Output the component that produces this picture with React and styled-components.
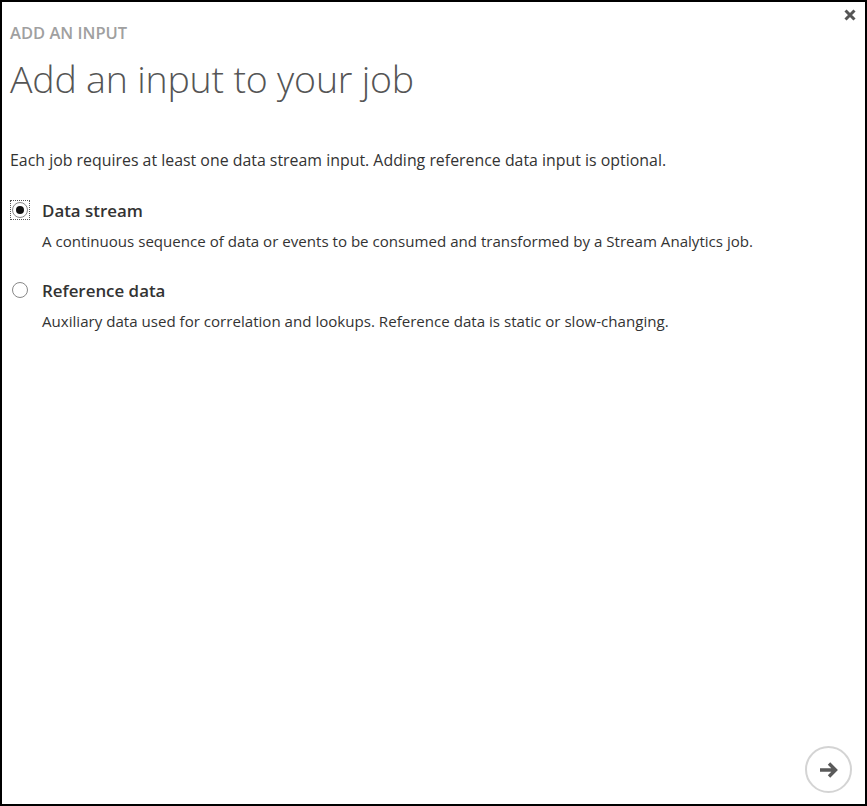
import React, { useState } from 'react';
import styled, { createGlobalStyle } from 'styled-components';

const GlobalStyle = createGlobalStyle`
  html, body { margin: 0; padding: 0; background: #fff; }
  * { box-sizing: border-box; }
`;

const FONT = '"Open Sans", "Noto Sans", "Liberation Sans", sans-serif';

const Dialog = styled.div`
  position: relative;
  width: 867px;
  height: 806px;
  border: 2px solid #000;
  background: #fff;
  font-family: ${FONT};
  color: #333;
  display: flex;
  flex-direction: column;
  padding: 20px 8px 0 8px;
`;

const Close = styled.button`
  position: absolute;
  top: 6px;
  right: 8px;
  width: 14px;
  height: 14px;
  padding: 0;
  border: 0;
  background: none;
  cursor: pointer;
`;

const Eyebrow = styled.div`
  font-size: 16.5px;
  font-weight: 600;
  color: #a0a0a0;
  line-height: 22px;
`;

const Title = styled.h1`
  margin: 12px 0 0;
  font-size: 37.5px;
  font-weight: 300;
  color: #555;
  line-height: 46px;
  letter-spacing: -0.2px;
`;

const Intro = styled.p`
  margin: 48px 0 0;
  font-size: 15.9px;
  line-height: 20px;
  color: #333;
`;

const Options = styled.div`
  margin-top: 30px;
  display: flex;
  flex-direction: column;
  gap: 29px;
`;

const Option = styled.label`
  display: grid;
  grid-template-columns: 20px 1fr;
  column-gap: 12px;
  row-gap: 9px;
  cursor: pointer;
`;

const RadioWrap = styled.span`
  width: 20px;
  height: 20px;
  display: flex;
  align-items: center;
  justify-content: center;
  border: 1px dotted ${p => (p.focused ? '#555' : 'transparent')};
  align-self: center;
  margin-top: -3px;
`;

const Radio = styled.span`
  width: 16px;
  height: 16px;
  border-radius: 50%;
  border: 1px solid #888;
  display: flex;
  align-items: center;
  justify-content: center;
  &::after {
    content: '';
    width: 8px;
    height: 8px;
    border-radius: 50%;
    background: ${p => (p.checked ? '#111' : 'transparent')};
  }
`;

const OptionLabel = styled.span`
  font-size: 16.9px;
  font-weight: 600;
  color: #333;
  line-height: 22px;
`;

const OptionDesc = styled.span`
  grid-column: 2;
  font-size: 15.1px;
  line-height: 20px;
  color: #333;
`;

const Footer = styled.div`
  margin-top: auto;
  display: flex;
  justify-content: flex-end;
  padding: 0 5px 11px 0;
`;

const NextButton = styled.button`
  width: 47px;
  height: 47px;
  border-radius: 50%;
  border: 2px solid #d4d4d4;
  background: #fff;
  display: flex;
  align-items: center;
  justify-content: center;
  padding: 0;
  cursor: pointer;
`;

const options = [
  {
    id: 'stream',
    label: 'Data stream',
    desc: 'A continuous sequence of data or events to be consumed and transformed by a Stream Analytics job.',
  },
  {
    id: 'reference',
    label: 'Reference data',
    desc: 'Auxiliary data used for correlation and lookups. Reference data is static or slow-changing.',
  },
];

export default function App() {
  const [selected, setSelected] = useState('stream');
  return (
    <>
      <GlobalStyle />
      <Dialog>
        <Close aria-label="Close">
          <svg width="14" height="14" viewBox="0 0 14 14">
            <path d="M2.5 2.5 L11.5 11.5 M11.5 2.5 L2.5 11.5" stroke="#555" strokeWidth="3" />
          </svg>
        </Close>
        <Eyebrow>ADD AN INPUT</Eyebrow>
        <Title>Add an input to your job</Title>
        <Intro>Each job requires at least one data stream input. Adding reference data input is optional.</Intro>
        <Options>
          {options.map(o => (
            <Option key={o.id} onClick={() => setSelected(o.id)}>
              <RadioWrap focused={selected === o.id}>
                <Radio checked={selected === o.id} />
              </RadioWrap>
              <OptionLabel>{o.label}</OptionLabel>
              <OptionDesc>{o.desc}</OptionDesc>
            </Option>
          ))}
        </Options>
        <Footer>
          <NextButton aria-label="Next">
            <svg width="24" height="24" viewBox="0 0 24 24">
              <path d="M3 12 H18 M12 5.5 L18.5 12 L12 18.5" fill="none" stroke="#5a5a5a" strokeWidth="3.4" />
            </svg>
          </NextButton>
        </Footer>
      </Dialog>
    </>
  );
}
